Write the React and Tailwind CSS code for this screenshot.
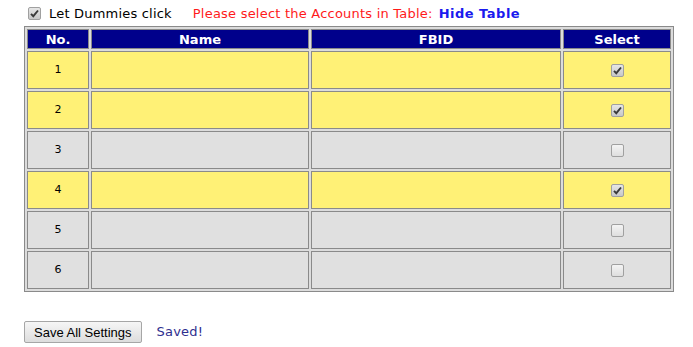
import { useState } from "react";

const initialRows = [
  { no: 1, name: "", fbid: "", selected: true },
  { no: 2, name: "", fbid: "", selected: true },
  { no: 3, name: "", fbid: "", selected: false },
  { no: 4, name: "", fbid: "", selected: true },
  { no: 5, name: "", fbid: "", selected: false },
  { no: 6, name: "", fbid: "", selected: false },
];

function Check({ checked, onChange }) {
  return (
    <button
      type="button"
      onClick={onChange}
      className={`flex h-[13px] w-[13px] items-center justify-center rounded-[2px] border border-[#a0a0a0] ${
        checked ? "bg-gradient-to-b from-[#e6e6e6] to-[#c8c8c8]" : "bg-gradient-to-b from-[#f4f4f4] to-[#dedede]"
      }`}
    >
      {checked && (
        <svg width="9" height="9" viewBox="0 0 9 9">
          <path d="M1 4.8 L3.3 7.2 L8 1.5" fill="none" stroke="#3a3a3a" strokeWidth="1.9" />
        </svg>
      )}
    </button>
  );
}

export default function App() {
  const [rows, setRows] = useState(initialRows);
  const [dummies, setDummies] = useState(true);
  const [showTable, setShowTable] = useState(true);

  const toggle = (i) =>
    setRows(rows.map((r, idx) => (idx === i ? { ...r, selected: !r.selected } : r)));

  return (
    <div className="min-h-screen bg-white pl-[24px] pt-[6px] font-['DejaVu_Sans',Verdana,sans-serif] text-[13px] text-black">
      <div className="flex h-[14px] items-center pl-[4px]">
        <Check checked={dummies} onChange={() => setDummies(!dummies)} />
        <span className="ml-[8px] leading-none tracking-[0.2px]">Let Dummies click</span>
        <span className="ml-[21px] leading-none tracking-[0.22px] text-[#ff1a1a]">Please select the Accounts in Table:</span>
        <button
          type="button"
          onClick={() => setShowTable(!showTable)}
          className="ml-[6px] font-bold leading-none tracking-[0.5px] text-[#1a1aee]"
        >
          Hide Table
        </button>
      </div>

      {showTable && (
        <table className="mt-[6px] w-[650px] border-separate border-spacing-[2px] border border-[#8a8a8a] bg-[#dcdcdc]">
          <thead>
            <tr className="h-[20px] text-white">
              <th className="w-[62px] border border-[#8a8a8a] bg-[#00008b] p-0 text-[13px] font-bold leading-none">No.</th>
              <th className="w-[218px] border border-[#8a8a8a] bg-[#00008b] p-0 text-[13px] font-bold leading-none">Name</th>
              <th className="w-[250px] border border-[#8a8a8a] bg-[#00008b] p-0 text-[13px] font-bold leading-none">FBID</th>
              <th className="w-[108px] border border-[#8a8a8a] bg-[#00008b] p-0 text-[13px] font-bold leading-none">Select</th>
            </tr>
          </thead>
          <tbody>
            {rows.map((r, i) => {
              const bg = r.selected ? "bg-[#fff176]" : "bg-[#e0e0e0]";
              return (
                <tr key={r.no} className="h-[38px]">
                  <td className={`border border-[#8a8a8a] p-0 text-center text-[11px] ${bg}`}>{r.no}</td>
                  <td className={`border border-[#8a8a8a] p-0 ${bg}`}>{r.name}</td>
                  <td className={`border border-[#8a8a8a] p-0 ${bg}`}>{r.fbid}</td>
                  <td className={`border border-[#8a8a8a] p-0 ${bg}`}>
                    <div className="flex justify-center">
                      <Check checked={r.selected} onChange={() => toggle(i)} />
                    </div>
                  </td>
                </tr>
              );
            })}
          </tbody>
        </table>
      )}

      <div className="mt-[29px] flex items-center">
        <button
          type="button"
          className="h-[22px] rounded-[2px] border border-[#a6a6a6] bg-gradient-to-b from-[#f6f6f6] to-[#dddddd] px-[9px] font-['Liberation_Sans',Arial,sans-serif] text-[13px] leading-none text-black"
        >
          Save All Settings
        </button>
        <span className="ml-[15px] tracking-[0.2px] text-[#2e2e8f]">Saved!</span>
      </div>
    </div>
  );
}
